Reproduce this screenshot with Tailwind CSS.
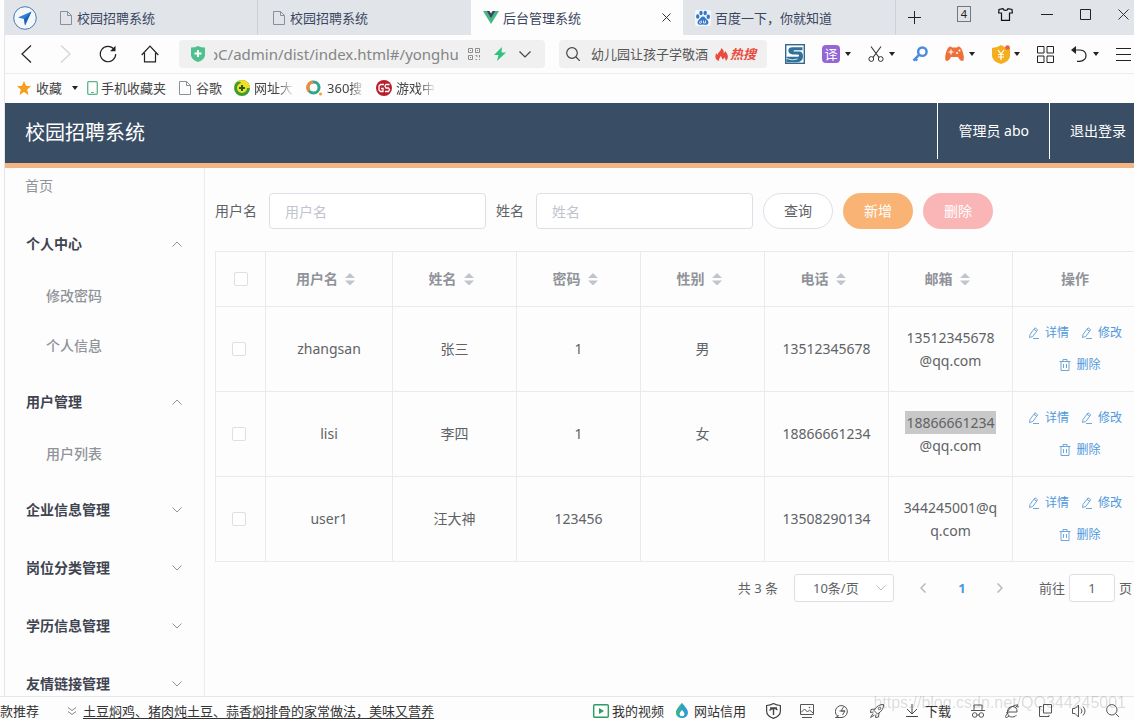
<!DOCTYPE html>
<html lang="zh-CN">
<head>
<meta charset="utf-8">
<title>后台管理系统</title>
<script src="https://cdn.jsdelivr.net/npm/@tailwindcss/browser@4"></script>
</head>
<body class="flex h-screen flex-col overflow-hidden bg-[#fdfdfd] font-['Noto_Sans','Noto_Sans_CJK_SC',sans-serif] text-sm/5 text-[#606266]">
<svg class="hidden">
  <symbol id="page" viewBox="0 0 12 14"><path d="M1 .5h6.500l4 4v9H.5V.5zM7.500.5v4h4" fill="none" stroke="#8a8f99"/></symbol>
  <symbol id="caret" viewBox="0 0 6 4"><path d="M0 0h6L3 4z" fill="#222"/></symbol>
  <symbol id="sort" viewBox="0 0 10 12"><path d="M0 5l5-5 5 5zM0 7.500h10l-5 5z" fill="#c0c4cc"/></symbol>
  <symbol id="up" viewBox="0 0 10 6"><path d="M.5 5.500L5 1l4.500 4.500" fill="none" stroke="#909399"/></symbol>
  <symbol id="down" viewBox="0 0 10 6"><path d="M.5.5L5 5 9.500.5" fill="none" stroke="#909399"/></symbol>
  <symbol id="pencil" viewBox="0 0 12 12"><path d="M2 7.500L7 .8l2.700 2L4.800 9.500 1.500 10.500zM5 11.500h6M6 2.300l2.700 2" fill="none" stroke="#5f9dd6" stroke-width=".9"/></symbol>
  <symbol id="trash" viewBox="0 0 12 12"><path d="M.5 2.500h11M4 2.500v-2h4v2M2 2.500v9h8v-9M4.500 5v4M7.500 5v4" fill="none" stroke="#5f9dd6" stroke-width=".9"/></symbol>
</svg>

<div class="ml-1 flex min-h-0 flex-1 flex-col border-l border-[#e4e6ea]">
  <!-- Tab strip -->
  <div class="flex h-[35px] shrink-0 bg-[#e1e5ea] text-[13px] text-[#3c4560]">
    <div class="flex w-[42px] shrink-0 items-center pl-2">
      <svg class="size-6" viewBox="0 0 24 24"><circle cx="12" cy="12" r="11.300" fill="#f4f8fd" stroke="#4a78b0"/><path d="M18.500 5.500L5 11.500l6 1.500 1 6.500z" fill="#2f7fd6"/><path d="M18.500 5.500L11 13l1 6.500z" fill="#1f63b8"/></svg>
    </div>
    <div class="flex w-[211px] shrink-0 items-center gap-[5px] border-r border-[#cdd1d8] pl-[13px]"><svg class="h-[14px] w-3"><use href="#page"/></svg>校园招聘系统</div>
    <div class="flex w-[213px] shrink-0 items-center gap-[5px] pl-[15px]"><svg class="h-[14px] w-3"><use href="#page"/></svg>校园招聘系统</div>
    <div class="flex w-[212px] shrink-0 items-center gap-1 bg-[#fdfdfd] pr-3 pl-3">
      <svg class="h-[13px] w-4" viewBox="0 0 16 13"><path d="M0 0h3.500L8 7.500 12.500 0H16L8 13z" fill="#41b883"/><path d="M3.500 0h3L8 2.500 9.500 0h3L8 7.500z" fill="#35495e"/></svg>
      <span class="flex-1">后台管理系统</span>
      <button aria-label="关闭标签"><svg class="size-[9px]" viewBox="0 0 9 9"><path d="M.5.5l8 8M8.500.5l-8 8" stroke="#333"/></svg></button>
    </div>
    <div class="flex w-[213px] shrink-0 items-center gap-1 border-r border-[#cdd1d8] pl-3">
      <svg class="size-4" viewBox="0 0 16 16"><rect width="16" height="16" rx="2" fill="#f3f7fc"/><g fill="#3478c8"><ellipse cx="2.700" cy="6.500" rx="1.700" ry="2.200"/><ellipse cx="6" cy="3" rx="1.700" ry="2.300"/><ellipse cx="10.200" cy="3" rx="1.700" ry="2.300"/><ellipse cx="13.300" cy="6.800" rx="1.700" ry="2.200"/><path d="M8 6.500c2 0 2.500 2 4 3.300 2.500 2.200 1.500 5-1 5-1.200 0-2-.4-3-.4s-1.800.4-3 .4c-2.500 0-3.500-2.800-1-5C5.500 8.500 6 6.500 8 6.500z"/></g><path d="M5.500 11.500a1 1 0 1 0 .8 1.500v-2.500M8.500 10.500v2.500h2v-2.500" fill="none" stroke="#fff" stroke-width=".8"/></svg>百度一下，你就知道
    </div>
    <button aria-label="新建标签" class="flex w-9 shrink-0 items-center justify-center"><svg class="size-[13px]" viewBox="0 0 13 13"><path d="M6.500 0v13M0 6.500h13" stroke="#222"/></svg></button>
    <div class="flex h-7 flex-1 items-center justify-between pr-[5px] pl-[25px]">
      <span class="flex h-4 w-[14px] items-center justify-center border border-[#777] text-[11px]/3 text-[#222]">4</span>
      <button aria-label="皮肤"><svg class="h-[13px] w-[15px]" viewBox="0 0 15 13"><path d="M5 .7L1 1.500.7 5H3.500v7.300h8V5h2.800L14 1.500l-4-.8C9.500 3 5.500 3 5 .7z" fill="none" stroke="#111" stroke-width="1.200"/></svg></button>
      <button aria-label="最小化"><svg class="size-3" viewBox="0 0 12 12"><path d="M0 6.500h12" stroke="#222"/></svg></button>
      <button aria-label="最大化"><svg class="size-[11px]" viewBox="0 0 11 11"><path d="M.5.5h10v10H.5z" fill="none" stroke="#222"/></svg></button>
      <button aria-label="关闭"><svg class="size-[11px]" viewBox="0 0 11 11"><path d="M.5.5l10 10M10.500.5l-10 10" stroke="#333"/></svg></button>
    </div>
  </div>

  <!-- Toolbar -->
  <div class="flex h-[39px] shrink-0 items-center border-b border-[#ececee]">
    <div class="flex w-[174px] shrink-0 items-center justify-between pr-[20px] pl-4">
      <button aria-label="后退"><svg class="h-[18px] w-[11px]" viewBox="0 0 11 18"><path d="M10 .5L1 9l9 8.500" fill="none" stroke="#222" stroke-width="1.200"/></svg></button>
      <button aria-label="前进" class="ml-1"><svg class="h-[18px] w-[11px]" viewBox="0 0 11 18"><path d="M1 .5L10 9l-9 8.500" fill="none" stroke="#d3d3cf" stroke-width="1.200"/></svg></button>
      <button aria-label="刷新" class="ml-1"><svg class="size-[18px]" viewBox="0 0 18 18"><path d="M15 4.200A7.700 7.700 0 1 0 16.700 9" fill="none" stroke="#222" stroke-width="1.200"/><path d="M16.500.8v5.500H11z" fill="#222"/></svg></button>
      <button aria-label="主页"><svg class="size-[18px]" viewBox="0 0 18 18"><path d="M.7 10L9 1.200 17.300 10M3.500 8v8.800h11V8" fill="none" stroke="#222" stroke-width="1.200"/></svg></button>
    </div>
    <div class="flex h-[28px] w-[366px] shrink-0 items-center rounded-sm bg-[#f0f0f1] pr-[14px] pl-3">
      <svg class="h-4 w-[14px] shrink-0" viewBox="0 0 14 16"><path d="M0 1.500Q4 1.500 7 0q3 1.500 7 1.500V9q0 4.500-7 7-7-2.500-7-7z" fill="#4fc18d"/><path d="M7 4v7M3.500 7.500h7" stroke="#fff" stroke-width="2"/></svg>
      <input aria-label="地址" value="oC/admin/dist/index.html#/yonghu" class="ml-[9px] w-[246px] shrink-0 bg-transparent indent-[-5px] text-[15px]/6 text-[#858585] outline-none">
      <div class="flex flex-1 items-center justify-between pl-2">
        <svg class="size-3" viewBox="0 0 12 12"><path d="M.5.500h4v4h-4zM7.500.5h4v4h-4zM.5 7.500h4v4h-4zM7.500 7.500h1.500v1.500M11.500 7v2.500M7.500 11.500h1.500M11 11.500h1M2 2.500h1M9 2.500h1M2 9.500h1" fill="none" stroke="#8d8d8d"/></svg>
        <svg class="h-[14px] w-3" viewBox="0 0 12 14"><path d="M8 0L0 8h4.500L3 14l9-8.500H7.500z" fill="#2ec27e"/></svg>
        <svg class="h-[7px] w-3" viewBox="0 0 12 7"><path d="M.5.5L6 6 11.500.5" fill="none" stroke="#444" stroke-width="1.200"/></svg>
      </div>
    </div>
    <div class="ml-[14px] flex h-[28px] w-[208px] shrink-0 items-center rounded-sm bg-[#f0f0f1] pl-[7px] text-[13px]">
      <svg class="size-[14px] shrink-0" viewBox="0 0 14 14"><circle cx="6" cy="6" r="5.300" fill="none" stroke="#444" stroke-width="1.200"/><path d="M10 10l4 4" stroke="#444" stroke-width="1.200"/></svg>
      <input aria-label="搜索" value="幼儿园让孩子学敬酒" class="ml-[11px] w-[122px] bg-transparent text-[#555] outline-none">
      <svg class="ml-[2px] h-[13px] w-[13px] shrink-0" viewBox="0 0 13 13"><path d="M6 0c3 2 3 4 2.500 5 1-.3 1.500-1 1.500-2 4 4 3.500 8 .5 10 .5-2-.5-3-1.500-3.500 0 1-.5 1.500-1.500 2C7 10 6.500 8.500 5.500 8c0 2-2 2.500-1.500 5C0 11.500-.5 8 1.500 5c.3 1 .8 1.500 1.500 1.500C3 4 6.500 3 6 0z" fill="#ea4b3c"/></svg>
      <span class="ml-[2px] font-bold text-[#ea4b3c] italic">热搜</span>
    </div>
    <div class="ml-[18px] flex items-center gap-[17px]">
      <svg class="size-5" viewBox="0 0 20 20"><rect x=".7" y=".7" width="18.600" height="18.600" fill="#fff" stroke="#35688c" stroke-width="1.400"/><path d="M17.500 3.200H7.500Q3.300 3.200 3.300 6.600T8 10.400h4.500q1.600 0 1.600 1.200t-1.600 1.200H1.500v5.500H12q6-.5 6-6T13 7.600H9.500Q8 7.300 8.800 6.200h8.700z" fill="#2f7199"/><path d="M1.500 14.500q6 2.500 11 .5" fill="none" stroke="#fff" stroke-width=".8"/></svg>
      <button aria-label="翻译" class="flex items-center gap-[5px]"><span class="flex size-[18px] items-center justify-center rounded-sm bg-[#9466d6] text-[13px]/4 text-white">译</span><svg class="h-1 w-[6px]"><use href="#caret"/></svg></button>
      <button aria-label="截图" class="flex items-center gap-[5px]"><svg class="size-4" viewBox="0 0 16 16"><path d="M3 .5l8 11M13 .5L5 11.500" stroke="#333" stroke-width="1.100"/><circle cx="3.300" cy="13" r="2.400" fill="none" stroke="#333"/><circle cx="12.700" cy="13" r="2.400" fill="none" stroke="#333"/></svg><svg class="h-1 w-[6px]"><use href="#caret"/></svg></button>
      <button aria-label="密码管理"><svg class="size-4" viewBox="0 0 17 17"><circle cx="11" cy="6" r="4.500" fill="none" stroke="#4a8be0" stroke-width="2.600"/><path d="M7.500 9.500L1.500 15.500M3 13l2.500 2.500" stroke="#4a8be0" stroke-width="2.600"/></svg></button>
      <button aria-label="游戏" class="flex items-center gap-[5px]"><svg class="h-4 w-[19px]" viewBox="0 0 19 16"><path d="M4 1q2-1 3 .5h5Q13 0 15 1q2.500 2 3.700 9 .6 5-1.500 5Q15 15 13 11H6q-2 4-4.200 4Q-.3 15 .3 10 1.500 3 4 1z" fill="#f0703a"/><path d="M6 3.500v5M3.500 6h5" stroke="#fff" stroke-width="1.200"/><circle cx="12" cy="7" r="1" fill="#fff"/><circle cx="14.500" cy="4.500" r="1" fill="#fff"/></svg><svg class="h-1 w-[6px]"><use href="#caret"/></svg></button>
      <button aria-label="优惠" class="flex items-center gap-1"><svg class="h-[19px] w-[18px]" viewBox="0 0 18 19"><path d="M0 3q5 0 9-3 4 3 9 3v8q0 5-9 8-9-3-9-8z" fill="#f5ae1d"/><path d="M6 5l3 4 3-4M9 9v6M6 9.500h6M6 12h6" fill="none" stroke="#fff" stroke-width="1.200"/><circle cx="15.500" cy="2.500" r="2.300" fill="#e8604c"/></svg><svg class="h-1 w-[6px]"><use href="#caret"/></svg></button>
      <button aria-label="扩展"><svg class="size-[17px]" viewBox="0 0 17 17"><path d="M.5.5h6.500v6.500H.5zM10 .5h6.500v6.500H10zM.5 10h6.500v6.500H.5zM10 10h6.500v6.500H10z" fill="none" stroke="#222"/></svg></button>
      <button aria-label="恢复" class="flex items-center gap-[5px]"><svg class="h-4 w-[17px]" viewBox="0 0 17 16"><path d="M2 4h7q6 .5 6 5.500T9 15.300H6" fill="none" stroke="#222" stroke-width="1.200"/><path d="M5 0v8L0 4z" fill="#222"/></svg><svg class="h-1 w-[6px]"><use href="#caret"/></svg></button>
      <button aria-label="菜单"><svg class="h-[13px] w-[15px]" viewBox="0 0 15 13"><path d="M0 .5h15M0 6.500h15M0 12.500h15" stroke="#222"/></svg></button>
    </div>
  </div>

  <!-- Bookmarks -->
  <div class="flex h-[29px] shrink-0 items-center pb-[2px] pl-3 text-[13px] text-[#444]">
    <svg class="size-[14px]" viewBox="0 0 14 14"><path d="M7 0l2 4.800 5 .4-3.800 3.300L11.400 14 7 10.900 2.600 14l1.200-5.500L0 5.200l5-.4z" fill="#f3a01c"/></svg>
    <a href="#" class="ml-[5px]">收藏</a>
    <svg class="ml-[10px] h-1 w-[6px]"><use href="#caret"/></svg>
    <svg class="ml-[9px] h-[14px] w-[11px]" viewBox="0 0 11 14"><rect x=".7" y=".7" width="9.600" height="12.600" rx="1" fill="none" stroke="#5fb58a" stroke-width="1.300"/><path d="M4 11.500h3" stroke="#5fb58a"/></svg>
    <a href="#" class="ml-[3px]">手机收藏夹</a>
    <svg class="ml-[13px] h-[14px] w-3"><use href="#page"/></svg>
    <a href="#" class="ml-[5px]">谷歌</a>
    <svg class="ml-3 size-4" viewBox="0 0 16 16"><circle cx="8" cy="8" r="8" fill="#3d9b35"/><path d="M8 0a8 8 0 0 1 8 8H12A4 4 0 0 0 8 4 4 4 0 0 0 0 8 8 8 0 0 1 8 0z" fill="#f2df26"/><circle cx="8" cy="8" r="5" fill="#f2df26"/><path d="M8 5v6M5 8h6" stroke="#1e5d22" stroke-width="2"/></svg>
    <a href="#" class="ml-1 w-10 overflow-hidden mask-r-from-60% whitespace-nowrap">网址大</a>
    <svg class="ml-3 size-4" viewBox="0 0 16 16"><circle cx="7.500" cy="7.500" r="5.500" fill="none" stroke="#2fa58a" stroke-width="3"/><path d="M3 11A5.500 5.500 0 0 1 7 2" fill="none" stroke="#f08b3c" stroke-width="3"/><circle cx="14.500" cy="14" r="1.500" fill="#f0a03c"/></svg>
    <a href="#" class="ml-[5px] w-[38px] overflow-hidden mask-r-from-60% whitespace-nowrap">360搜</a>
    <svg class="ml-[11px] size-4" viewBox="0 0 16 16"><circle cx="8" cy="8" r="8" fill="#b51f2e"/><path d="M8 4.500H4.500L3 6v4l1.500 1.500H7V8.500H5M13.500 4.500H10L9 6l1 2h2.500l1 1.500-1 2H9" fill="none" stroke="#fff" stroke-width="1.300"/></svg>
    <a href="#" class="ml-1 w-10 overflow-hidden mask-r-from-60% whitespace-nowrap">游戏中</a>
  </div>

  <!-- Application header -->
  <header class="flex h-[65px] shrink-0 border-b-[5px] border-[#f3b583] bg-[#394d65] text-white">
    <h1 class="flex flex-1 items-center pl-5 text-xl">校园招聘系统</h1>
    <div class="flex h-14 items-center border-l border-white px-5">管理员 abo</div>
    <a href="#" class="flex h-14 items-center border-l border-white pr-2 pl-[20px]">退出登录</a>
  </header>

  <div class="flex min-h-0 flex-1 overflow-hidden">
    <nav class="w-[200px] shrink-0 overflow-hidden border-r border-[#ececee] text-[#909399]">
      <a href="#" class="mb-3 flex h-9 items-center pl-5">首页</a>
      <button class="flex h-14 w-full items-center justify-between pr-[22px] pl-[21px] font-bold text-[#3f4450]">个人中心<svg class="h-[6px] w-[10px]"><use href="#up"/></svg></button>
      <a href="#" class="flex h-[50px] items-center pb-[2px] pl-[41px] font-medium">修改密码</a>
      <a href="#" class="flex h-[50px] items-center pb-[2px] pl-[41px] font-medium">个人信息</a>
      <button class="mt-[2px] flex h-14 w-full items-center justify-between pr-[22px] pl-[21px] font-bold text-[#3f4450]">用户管理<svg class="h-[6px] w-[10px]"><use href="#up"/></svg></button>
      <a href="#" class="flex h-[50px] items-center pb-[2px] pl-[41px] font-medium">用户列表</a>
      <button class="mt-[2px] flex h-14 w-full items-center justify-between pr-[22px] pl-[21px] font-bold text-[#3f4450]">企业信息管理<svg class="h-[6px] w-[10px]"><use href="#down"/></svg></button>
      <button class="mt-[2px] flex h-14 w-full items-center justify-between pr-[22px] pl-[21px] font-bold text-[#3f4450]">岗位分类管理<svg class="h-[6px] w-[10px]"><use href="#down"/></svg></button>
      <button class="mt-[2px] flex h-14 w-full items-center justify-between pr-[22px] pl-[21px] font-bold text-[#3f4450]">学历信息管理<svg class="h-[6px] w-[10px]"><use href="#down"/></svg></button>
      <button class="mt-[2px] flex h-14 w-full items-center justify-between pr-[22px] pl-[21px] font-bold text-[#3f4450]">友情链接管理<svg class="h-[6px] w-[10px]"><use href="#down"/></svg></button>
    </nav>

    <main class="min-w-0 flex-1 pt-[25px] pl-[10px]">
      <form class="flex items-center gap-[10px]">
        <label for="username" class="mr-[2px]">用户名</label>
        <input id="username" placeholder="用户名" class="h-9 w-[217px] rounded border border-[#dcdfe6] bg-white px-[15px] outline-none placeholder:text-[#c0c4cc]">
        <label for="realname" class="mr-[2px]">姓名</label>
        <input id="realname" placeholder="姓名" class="h-9 w-[217px] rounded border border-[#dcdfe6] bg-white px-[15px] outline-none placeholder:text-[#c0c4cc]">
        <button type="button" class="h-9 w-[70px] rounded-full border border-[#dcdfe6] bg-white">查询</button>
        <button type="button" class="h-9 w-[70px] rounded-full bg-[#f9b475] text-white">新增</button>
        <button type="button" class="h-9 w-[70px] rounded-full bg-[#fab6b6] text-white">删除</button>
      </form>

      <table class="mt-[22px] w-[calc(100%+4px)] table-fixed border-collapse border border-[#e8eaee] text-center">
        <colgroup><col class="w-[50px]"><col class="w-[127px]"><col class="w-[124px]"><col class="w-[124px]"><col class="w-[124px]"><col class="w-[124px]"><col class="w-[124px]"><col></colgroup>
        <thead>
          <tr class="h-[55px] text-[#909399] *:border *:border-[#e8eaee]">
            <th><input type="checkbox" aria-label="全选" class="block mx-auto size-[14px] appearance-none rounded-xs border border-[#dcdfe6] bg-white"></th>
            <th><span class="flex items-center justify-center">用户名<svg class="mx-[7px] h-3 w-[10px]"><use href="#sort"/></svg></span></th>
            <th><span class="flex items-center justify-center">姓名<svg class="mx-[7px] h-3 w-[10px]"><use href="#sort"/></svg></span></th>
            <th><span class="flex items-center justify-center">密码<svg class="mx-[7px] h-3 w-[10px]"><use href="#sort"/></svg></span></th>
            <th><span class="flex items-center justify-center">性别<svg class="mx-[7px] h-3 w-[10px]"><use href="#sort"/></svg></span></th>
            <th><span class="flex items-center justify-center">电话<svg class="mx-[7px] h-3 w-[10px]"><use href="#sort"/></svg></span></th>
            <th><span class="flex items-center justify-center">邮箱<svg class="mx-[7px] h-3 w-[10px]"><use href="#sort"/></svg></span></th>
            <th>操作</th>
          </tr>
        </thead>
        <tbody>
          <tr class="h-[85px] *:border *:border-[#e8eaee]">
            <td class="pr-1"><input type="checkbox" aria-label="选择 zhangsan" class="block mx-auto size-[14px] appearance-none rounded-xs border border-[#dcdfe6] bg-white"></td>
            <td>zhangsan</td><td>张三</td><td>1</td><td>男</td><td>13512345678</td>
            <td class="leading-[23px]">13512345678<br>@qq.com</td>
            <td><div class="flex flex-wrap justify-center gap-x-3 gap-y-3 text-xs/5 text-[#5098dc]">
              <button class="flex items-center gap-[5px]"><svg class="size-3"><use href="#pencil"/></svg>详情</button>
              <button class="flex items-center gap-[5px]"><svg class="size-3"><use href="#pencil"/></svg>修改</button>
              <button class="ml-[10px] flex items-center gap-[5px]"><svg class="size-3"><use href="#trash"/></svg>删除</button>
            </div></td>
          </tr>
          <tr class="h-[85px] *:border *:border-[#e8eaee]">
            <td class="pr-1"><input type="checkbox" aria-label="选择 lisi" class="block mx-auto size-[14px] appearance-none rounded-xs border border-[#dcdfe6] bg-white"></td>
            <td>lisi</td><td>李四</td><td>1</td><td>女</td><td>18866661234</td>
            <td class="leading-[23px]"><mark class="inline-block bg-[#c8c8c8] px-px text-inherit">18866661234</mark><br>@qq.com</td>
            <td><div class="flex flex-wrap justify-center gap-x-3 gap-y-3 text-xs/5 text-[#5098dc]">
              <button class="flex items-center gap-[5px]"><svg class="size-3"><use href="#pencil"/></svg>详情</button>
              <button class="flex items-center gap-[5px]"><svg class="size-3"><use href="#pencil"/></svg>修改</button>
              <button class="ml-[10px] flex items-center gap-[5px]"><svg class="size-3"><use href="#trash"/></svg>删除</button>
            </div></td>
          </tr>
          <tr class="h-[85px] *:border *:border-[#e8eaee]">
            <td class="pr-1"><input type="checkbox" aria-label="选择 user1" class="block mx-auto size-[14px] appearance-none rounded-xs border border-[#dcdfe6] bg-white"></td>
            <td>user1</td><td>汪大神</td><td>123456</td><td></td><td>13508290134</td>
            <td class="leading-[23px]">344245001@q<br>q.com</td>
            <td><div class="flex flex-wrap justify-center gap-x-3 gap-y-3 text-xs/5 text-[#5098dc]">
              <button class="flex items-center gap-[5px]"><svg class="size-3"><use href="#pencil"/></svg>详情</button>
              <button class="flex items-center gap-[5px]"><svg class="size-3"><use href="#pencil"/></svg>修改</button>
              <button class="ml-[10px] flex items-center gap-[5px]"><svg class="size-3"><use href="#trash"/></svg>删除</button>
            </div></td>
          </tr>
        </tbody>
      </table>

      <div class="mt-3 flex items-center justify-end pr-[2px] text-[13px]">
        <span class="mr-4">共 3 条</span>
        <div class="relative mr-5">
          <select aria-label="每页条数" class="h-7 w-[100px] appearance-none rounded-[3px] border border-[#dcdfe6] bg-white pl-[18px]"><option>10条/页</option></select>
          <svg class="pointer-events-none absolute top-[11px] right-2 h-[6px] w-[10px] opacity-60"><use href="#down"/></svg>
        </div>
        <button aria-label="上一页" class="flex w-[19px] justify-center"><svg class="h-[10px] w-[6px]" viewBox="0 0 6 10"><path d="M5.500.5L1 5l4.500 4.500" fill="none" stroke="#b4b8c0" stroke-width="1.500"/></svg></button>
        <button class="mx-[10px] w-[38px] font-bold text-[#5098dc]">1</button>
        <button aria-label="下一页" class="flex w-[19px] justify-center"><svg class="h-[10px] w-[6px]" viewBox="0 0 6 10"><path d="M.5.5L5 5 .5 9.500" fill="none" stroke="#b4b8c0" stroke-width="1.500"/></svg></button>
        <label for="jump" class="ml-[29px]">前往</label>
        <input id="jump" value="1" class="mx-1 h-7 w-[46px] rounded-[3px] border border-[#dcdfe6] bg-white text-center outline-none">页
      </div>
    </main>
  </div>
</div>

<!-- Status bar -->
<footer class="relative flex h-6 shrink-0 items-center border-t border-[#e4e6ea] pt-1 text-[13px] text-[#333]">
  <span>款推荐</span>
  <svg class="ml-[29px] size-2" viewBox="0 0 8 8"><path d="M0 .5l4 3 4-3M0 4.500l4 3 4-3" fill="none" stroke="#777" stroke-width=".9"/></svg>
  <a href="#" class="ml-[7px] underline underline-offset-2">土豆焖鸡、猪肉炖土豆、蒜香焖排骨的家常做法，美味又营养</a>
  <div class="ml-auto flex items-center pr-[15px]">
    <svg class="h-[14px] w-4" viewBox="0 0 16 14"><rect x=".7" y=".7" width="14.600" height="12.600" rx="1" fill="none" stroke="#2b9d67" stroke-width="1.400"/><path d="M6 4l5 3-5 3z" fill="#2b9d67"/></svg>
    <a href="#" class="ml-[3px]">我的视频</a>
    <svg class="ml-3 h-[15px] w-3" viewBox="0 0 12 15"><path d="M6 0q6 6.500 6 9.500a6 5.500 0 0 1-12 0Q0 6.500 6 0z" fill="#2e9fd2"/><path d="M6 0Q0 6.500 0 9.500a6 5.500 0 0 0 3 4.500z" fill="#38b48b"/><path d="M6 7q2.500 2.500 2.500 4a2.500 2.200 0 0 1-5 0Q3.500 9.500 6 7z" fill="#fff"/></svg>
    <a href="#" class="ml-[6px]">网站信用</a>
    <svg class="ml-5 h-4 w-[15px]" viewBox="0 0 15 16"><path d="M.6 2.500q4-.2 6.900-1.900 2.900 1.700 6.900 1.900V8q0 5-6.900 7.400Q.6 13 .6 8z" fill="none" stroke="#444" stroke-width="1.200"/><path d="M3.500 7.500q4-4 8-.5M4 5h7M7.500 5v7" fill="none" stroke="#444" stroke-width="1.400"/></svg>
    <svg class="ml-[19px] size-[14px]" viewBox="0 0 14 14"><path d="M.5.5h13v10H.5zM2 13.500h10M1 8.500L4.500 5l3 3 2-2L13 9" fill="none" stroke="#555"/><circle cx="9.500" cy="3.500" r=".8" fill="#555"/></svg>
    <svg class="ml-[21px] size-[14px]" viewBox="0 0 14 14"><path d="M3 12.500A6 6 0 1 1 7 13.500H.5q2 0 3-2.500M8.500 3L6 7h4L7.500 11M4.500 7H10" fill="none" stroke="#555"/></svg>
    <svg class="ml-[21px] size-[14px]" viewBox="0 0 14 14"><path d="M13.500.5Q8 0 4 6.500L7.500 10Q14 6 13.500.5zM5 5L1 5.500l-.5 3 3-.5M9 9l-.5 4-3 .5.5-3M3 9.500L.5 13.500l4-2.500" fill="none" stroke="#555"/><circle cx="9.500" cy="4.500" r="1.200" fill="none" stroke="#555"/></svg>
    <svg class="ml-[22px] h-[13px] w-3" viewBox="0 0 12 13"><path d="M6 0v10M1 5l5 5 5-5M0 12.500h12" fill="none" stroke="#444"/></svg>
    <a href="#" class="ml-[7px]">下载</a>
    <svg class="ml-[20px] size-[14px]" viewBox="0 0 14 14"><path d="M3 6V1h8v5M0 6.500h14M6 11h2" fill="none" stroke="#555"/><circle cx="3.700" cy="11" r="2.300" fill="none" stroke="#555"/><circle cx="10.300" cy="11" r="2.300" fill="none" stroke="#555"/></svg>
    <svg class="ml-5 size-[14px]" viewBox="0 0 14 14"><path d="M3 8h9Q12.500 3 7.500 2.500 2.500 3 2.500 8T7.500 13q3 0 4-2M11 3q2.500-3 2 .5M3 8q-4 6-1.500 5.500Q3 13 4 12M1.500 9Q6 1 13 .8" fill="none" stroke="#555"/></svg>
    <svg class="ml-5 size-[13px]" viewBox="0 0 13 13"><path d="M4.500.5h8v8.500h-8zM2.500 2.500h-2v10h9.500v-1.500" fill="none" stroke="#555"/></svg>
    <svg class="ml-5 size-[14px]" viewBox="0 0 14 14"><path d="M.5 4.500h2.500L6.500 1v12L3 9.500H.5zM9 4.500q2 2.500 0 5M11 2.500q4 4.500 0 9" fill="none" stroke="#555"/></svg>
    <svg class="ml-5 size-[13px]" viewBox="0 0 13 13"><circle cx="5.800" cy="5.800" r="5.200" fill="none" stroke="#555"/><path d="M9.500 9.500L13 13" stroke="#555"/></svg>
  </div>
  <span class="pointer-events-none absolute -top-[6px] right-2 font-['Liberation_Sans',sans-serif] text-base/6 text-black/15">https://blog.csdn.net/QQ344245001</span>
</footer>
</body>
</html>
